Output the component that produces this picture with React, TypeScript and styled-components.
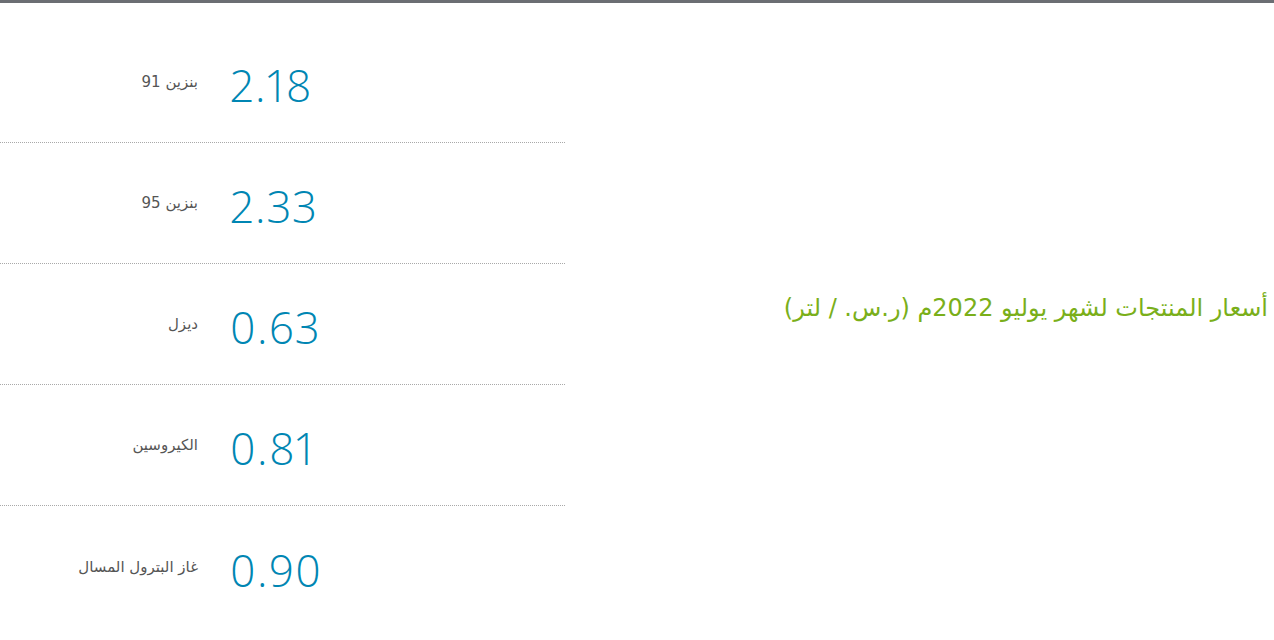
import styled, { createGlobalStyle } from "styled-components";

const GlobalStyle = createGlobalStyle`
  html, body {
    margin: 0;
    padding: 0;
    background: #ffffff;
  }
  body {
    font-family: "Open Sans", "DejaVu Sans", sans-serif;
  }
`;

const prices = [
    {label: "بنزين 91", value: "2.18"},
    {label: "بنزين 95", value: "2.33"},
    {label: "ديزل", value: "0.63"},
    {label: "الكيروسين", value: "0.81"},
    {label: "غاز البترول المسال", value: "0.90"},
];

const App = () => {
    return (
        <>
            <GlobalStyle/>
            <Section>
                <PriceList>
                    {prices.map((p) => (
                        <PriceRow key={p.label}>
                            <Label dir="rtl">{p.label}</Label>
                            <Value>{p.value}</Value>
                        </PriceRow>
                    ))}
                </PriceList>
                <Title dir="rtl">أسعار المنتجات لشهر يوليو 2022م (ر.س. / لتر)</Title>
            </Section>
        </>
    );
};

const Section = styled.section`
  display: flex;
  align-items: flex-start;
  border-top: 3px solid #6b6e73;
  padding-top: 19px;
  height: 640px;
  box-sizing: border-box;
`;

const PriceList = styled.div`
  width: 565px;
  flex-shrink: 0;
`;

const PriceRow = styled.div`
  display: grid;
  grid-template-columns: 198px auto;
  column-gap: 32px;
  align-items: center;
  height: 121px;
  box-sizing: border-box;
  padding-top: 6px;
  border-bottom: 1px dotted #a9a9a9;

  &:last-child {
    border-bottom: none;
  }
`;

const Label = styled.div`
  text-align: right;
  font-family: "DejaVu Sans", sans-serif;
  font-size: 15px;
  color: #555555;
  margin-top: -6px;
`;

const Value = styled.div`
  font-family: "Open Sans", sans-serif;
  font-weight: 300;
  font-size: 44px;
  font-variant-numeric: proportional-nums;
  letter-spacing: 1.5px;
  color: #0086b3;
  line-height: 1;
`;

const Title = styled.h2`
  flex: 1;
  margin: 272px 6px 0 0;
  text-align: right;
  font-family: "DejaVu Sans", sans-serif;
  font-weight: normal;
  font-size: 24px;
  color: #7aaf1a;
`;

export default App;
